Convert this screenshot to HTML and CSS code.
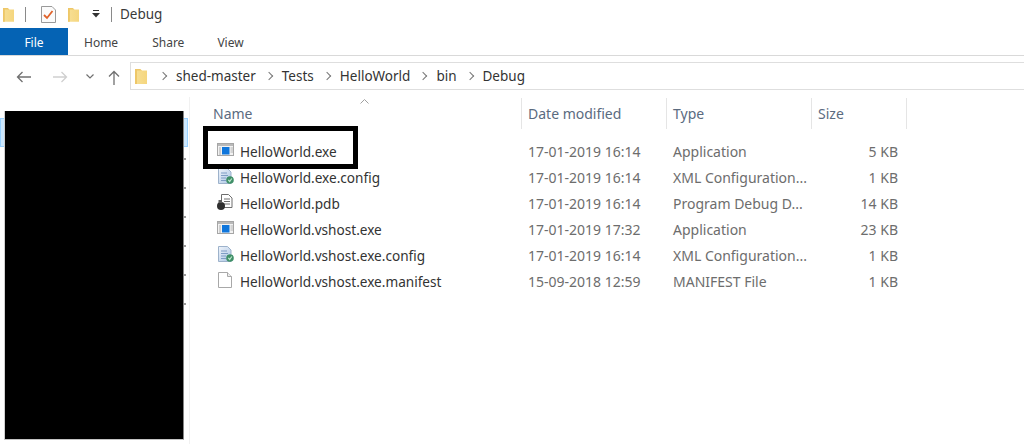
FILE: index.html
```html
<!DOCTYPE html>
<html lang="en">
<head>
<meta charset="utf-8">
<title>Debug</title>
<link rel="stylesheet" href="styles.css">
</head>
<body>
<svg class="defs" width="0" height="0" aria-hidden="true">
  <defs>
    <linearGradient id="fg" x1="0" y1="0" x2="1" y2="0">
      <stop offset="0" stop-color="#f7df95"/><stop offset="1" stop-color="#f5d67e"/>
    </linearGradient>
    <linearGradient id="dg" x1="0" y1="0" x2="1" y2="1">
      <stop offset="0" stop-color="#f1f5fb"/><stop offset="1" stop-color="#a9c4e4"/>
    </linearGradient>
    <symbol id="folder" viewBox="0 0 12 16">
      <path d="M0 1h5l2 1.500h5V16H0z" fill="url(#fg)"/>
      <path d="M0 1h5l2 1.500H2V16H0z" fill="#eec768"/>
    </symbol>
    <symbol id="exe" viewBox="0 0 17 13">
      <rect x=".5" y=".5" width="16" height="12" fill="#f2f2f2" stroke="#a6a6a6"/>
      <rect x="1" y="1" width="15" height="2" fill="#b9b9b9"/>
      <rect x="2" y="4" width="2" height="8" fill="#cfcfcf"/>
      <rect x="5" y="4" width="7.500" height="7.500" fill="#0f76dc"/>
      <path d="M13.500 5H16M13.500 7H16M13.500 9H16" stroke="#b4b4b4"/>
    </symbol>
    <symbol id="config" viewBox="0 0 16 16">
      <path d="M.5.500h9l3.500 3.500v11.500H.5z" fill="url(#dg)" stroke="#9db2cb"/>
      <path d="M3 5h6M3 7.500h7M3 10h5M3 12.500h5" stroke="#7e9dc4"/>
      <circle cx="12" cy="12" r="3.800" fill="#3f8f68"/>
      <path d="M10.300 11.800l1.400 1.700 2.100-3" fill="none" stroke="#bfe8cd" stroke-width="1.200"/>
    </symbol>
    <symbol id="pdb" viewBox="0 0 16 16">
      <path d="M4.500.500h7l3.500 3.500v9.500H4.500z" fill="#fff" stroke="#6e6e6e"/>
      <path d="M7 5h6M7 7.500h6M7 10h6" stroke="#6e6e6e"/>
      <circle cx="4" cy="12" r="4" fill="#2f2f2f"/>
      <rect x="1.500" y="6" width="3.500" height="3" fill="#5c5c5c"/>
    </symbol>
    <symbol id="file" viewBox="0 0 14 16">
      <path d="M.5.500h9l4 4v11H.5z" fill="#fff" stroke="#a8a8a8"/>
      <path d="M9.500.500v4h4" fill="#eee" stroke="#a8a8a8"/>
    </symbol>
  </defs>
</svg>

<header class="titlebar">
  <svg class="qat-folder first"><use href="#folder"/></svg>
  <span class="qat-sep"></span>
  <svg class="qat-check" viewBox="0 0 15 17" width="15" height="17">
    <path d="M.5.500h10.500l3.500 3.500v12.500H.5z" fill="#fbfbfb" stroke="#9a9a9a"/>
    <path d="M3 9l3 3 5.500-7" fill="none" stroke="#e0622a" stroke-width="1.800"/>
  </svg>
  <svg class="qat-folder second"><use href="#folder"/></svg>
  <svg class="qat-drop" viewBox="0 0 8 8" width="8" height="8">
    <path d="M1 .5h6" stroke="#333"/><path d="M0 3h8L4 7.500z" fill="#333"/>
  </svg>
  <span class="qat-sep last"></span>
  <span class="title">Debug</span>
</header>

<nav class="ribbon">
  <span class="tab file-tab">File</span>
  <span class="tab home">Home</span>
  <span class="tab share">Share</span>
  <span class="tab view">View</span>
</nav>

<section class="navbar">
  <svg class="nav back" viewBox="0 0 15 12" width="15" height="12"><path d="M15 6H1.500M6.500 1L1.500 6l5 5" fill="none" stroke="#707070" stroke-width="1.300"/></svg>
  <svg class="nav forward" viewBox="0 0 15 12" width="15" height="12"><path d="M0 6h13.500M8.500 1l5 5-5 5" fill="none" stroke="#cfcfcf" stroke-width="1.300"/></svg>
  <svg class="nav recent" viewBox="0 0 8 5" width="8" height="5"><path d="M.5.500L4 4 7.500.5" fill="none" stroke="#707070" stroke-width="1.200"/></svg>
  <svg class="nav up" viewBox="0 0 12 15" width="12" height="15"><path d="M6 15V1.500M1 6.500l5-5 5 5" fill="none" stroke="#707070" stroke-width="1.300"/></svg>
  <div class="address">
    <svg class="addr-folder"><use href="#folder"/></svg>
    <span class="crumb-sep lead"></span><span class="crumb">shed-master</span>
    <span class="crumb-sep"></span><span class="crumb">Tests</span>
    <span class="crumb-sep"></span><span class="crumb">HelloWorld</span>
    <span class="crumb-sep"></span><span class="crumb">bin</span>
    <span class="crumb-sep"></span><span class="crumb">Debug</span>
  </div>
</section>

<main class="content">
  <aside class="sidebar">
    <div class="selected"></div>
    <div class="redaction"></div>
  </aside>
  <section class="list">
    <svg class="sort" viewBox="0 0 9 5" width="9" height="5"><path d="M.5 4.500L4.500.5l4 4" fill="none" stroke="#a0a0a0"/></svg>
    <div class="row head">
      <span class="c-name">Name</span>
      <span class="c-date">Date modified</span>
      <span class="c-type">Type</span>
      <span class="c-size">Size</span>
    </div>
    <div class="rows">
      <div class="row">
        <span class="c-name"><svg class="ico ico-exe"><use href="#exe"/></svg>HelloWorld.exe</span>
        <span class="c-date">17-01-2019 16:14</span><span class="c-type">Application</span><span class="c-size">5 KB</span>
      </div>
      <div class="row">
        <span class="c-name"><svg class="ico ico-doc"><use href="#config"/></svg>HelloWorld.exe.config</span>
        <span class="c-date">17-01-2019 16:14</span><span class="c-type">XML Configuration...</span><span class="c-size">1 KB</span>
      </div>
      <div class="row">
        <span class="c-name"><svg class="ico ico-pdb"><use href="#pdb"/></svg>HelloWorld.pdb</span>
        <span class="c-date">17-01-2019 16:14</span><span class="c-type">Program Debug D...</span><span class="c-size">14 KB</span>
      </div>
      <div class="row">
        <span class="c-name"><svg class="ico ico-exe"><use href="#exe"/></svg>HelloWorld.vshost.exe</span>
        <span class="c-date">17-01-2019 17:32</span><span class="c-type">Application</span><span class="c-size">23 KB</span>
      </div>
      <div class="row">
        <span class="c-name"><svg class="ico ico-doc"><use href="#config"/></svg>HelloWorld.vshost.exe.config</span>
        <span class="c-date">17-01-2019 16:14</span><span class="c-type">XML Configuration...</span><span class="c-size">1 KB</span>
      </div>
      <div class="row">
        <span class="c-name"><svg class="ico ico-plain"><use href="#file"/></svg>HelloWorld.vshost.exe.manifest</span>
        <span class="c-date">15-09-2018 12:59</span><span class="c-type">MANIFEST File</span><span class="c-size">1 KB</span>
      </div>
    </div>
    <div class="callout"></div>
  </section>
</main>
</body>
</html>
```
FILE: styles.css
```css
* { box-sizing: border-box; }
html, body { margin: 0; height: 100%; }
body {
  width: 1024px;
  height: 444px;
  overflow: hidden;
  background: #fff;
  color: #2b2b2b;
  font-family: "Noto Sans", "Open Sans", "Liberation Sans", sans-serif;
  font-size: 14px;
}
.defs { position: absolute; }

.titlebar { height: 28px; display: flex; align-items: center; }
.qat-folder { width: 11px; height: 15px; flex: none; }
.qat-folder.first { margin-left: 3px; }
.qat-sep { width: 1px; height: 15px; background: #8a8a8a; margin-left: 11px; flex: none; }
.qat-check { margin-left: 15px; flex: none; }
.qat-folder.second { margin-left: 12px; }
.qat-drop { margin-left: 13px; flex: none; }
.qat-sep.last { margin-left: 11px; }
.title { margin-left: 8px; font-size: 13.5px; color: #3a3a3a; }

.ribbon {
  height: 28px;
  display: flex;
  align-items: center;
  border-bottom: 1px solid #d9d9d9;
  font-size: 12px;
  color: #444;
}
.tab { display: block; padding-top: 1px; }
.file-tab {
  width: 68px;
  height: 27px;
  line-height: 27px;
  text-align: center;
  background: #0563b4;
  color: #fff;
}
.home { margin-left: 16px; }
.share { margin-left: 34px; }
.view { margin-left: 33px; }

.navbar {
  height: 28px;
  margin-top: 6px;
  margin-bottom: 7px;
  display: flex;
  align-items: flex-start;
}
.nav { flex: none; }
.back { margin: 9px 0 0 16px; }
.forward { margin: 9px 0 0 22px; }
.recent { margin: 12px 0 0 18px; }
.up { margin: 8px 0 0 14px; }
.address {
  margin-left: 10px;
  margin-right: -4px;
  flex: 1;
  height: 28px;
  display: flex;
  align-items: center;
  border: 1px solid #dedede;
  padding-left: 4px;
  font-size: 13.5px;
  color: #333;
}
.addr-folder { width: 12px; height: 16px; flex: none; }
.crumb-sep {
  width: 6px;
  height: 6px;
  border-top: 1px solid #777;
  border-right: 1px solid #777;
  transform: rotate(45deg);
  margin: 0 10px;
  flex: none;
}
.crumb-sep.lead { margin-left: 13px; }

.content { display: flex; height: 347px; }
.sidebar {
  width: 190px;
  flex: none;
  position: relative;
  border-right: 1px solid #f1f1f1;
}
.selected {
  position: absolute;
  top: 21px;
  left: 0;
  width: 188px;
  height: 29px;
  background: #cce8ff;
  border: 1px solid #99d1ff;
}
.redaction {
  position: absolute;
  top: 14px;
  left: 4px;
  width: 180px;
  height: 329px;
  background: #000;
  border-left: 1px solid #cfcfcf;
  border-right: 1px solid #858585;
  border-bottom: 1px solid #c4c4c4;
}
.redaction::after {
  content: "";
  position: absolute;
  top: 47px;
  right: -3px;
  width: 2px;
  height: 174px;
  background: repeating-linear-gradient(to bottom, #9a9a9a 0 2px, transparent 2px 29px);
}

.list { flex: 1; position: relative; padding-left: 23px; }
.sort { position: absolute; left: 170px; top: 2px; }
.row { display: flex; align-items: center; height: 26px; white-space: nowrap; }
.head { height: 31px; margin-top: 1px; align-items: stretch; }
.head span { color: #5b6b7f; line-height: 31px; }
.rows { margin-top: 9px; }
.c-name { width: 308px; flex: none; display: flex; align-items: center; color: #333; font-size: 13.6px; }
.c-date, .c-type { width: 145px; flex: none; color: #6d6d6d; padding-left: 7px; }
.c-size { width: 96px; flex: none; text-align: right; color: #6d6d6d; padding-right: 9px; }
.head .c-name { font-size: 14px; }
.head .c-date, .head .c-type, .head .c-size { border-left: 1px solid #e5e5e5; padding-left: 6px; }
.head .c-size { text-align: left; border-right: 1px solid #e5e5e5; }
.ico { flex: none; margin-top: -3px; }
.ico-exe { width: 17px; height: 13px; margin-left: 4px; margin-right: 6px; }
.ico-doc { width: 16px; height: 16px; margin-left: 5px; margin-right: 6px; }
.ico-pdb { width: 16px; height: 16px; margin-left: 4px; margin-right: 7px; }
.ico-plain { width: 14px; height: 16px; margin-left: 5px; margin-right: 8px; }

.callout {
  position: absolute;
  left: 13px;
  top: 29px;
  width: 155px;
  height: 43px;
  border: 5px solid #000;
}
```
